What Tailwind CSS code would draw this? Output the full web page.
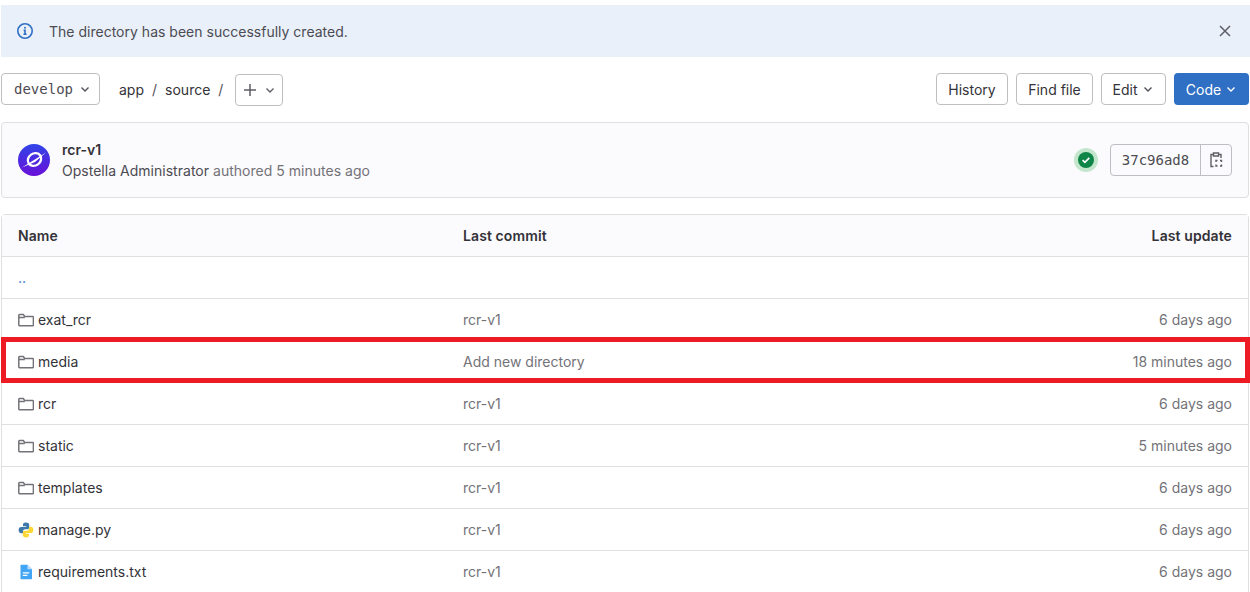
<!DOCTYPE html>
<html>
<head>
<meta charset="utf-8">
<script src="https://cdn.jsdelivr.net/npm/@tailwindcss/browser@4"></script>
</head>
<body class="bg-white overflow-hidden font-['Inter',sans-serif] text-[14px] text-[#303030]">
<div class="relative h-[592px] w-[1250px] overflow-hidden pl-px pt-[5px]">

  <!-- Alert -->
  <div class="flex h-[52px] items-center bg-[#e9f0fa] pl-4 pr-[17px] text-[#4c4b52]">
    <svg class="h-4 w-4 text-[#2f6fc4]" viewBox="0 0 16 16" fill="none" stroke="currentColor" stroke-width="1.6"><circle cx="8" cy="8" r="7.2"/><path d="M6.6 7.4H8v3.8M6.400 11.300h3.200" /><circle cx="8" cy="4.800" r="1" fill="currentColor" stroke="none"/></svg>
    <span class="ml-4 tracking-[0.01px]">The directory has been successfully created.</span>
    <svg class="ml-auto h-4 w-4 text-[#5e5e66]" viewBox="0 0 16 16" fill="none" stroke="currentColor" stroke-width="1.5"><path d="M3 3l10 10M13 3L3 13"/></svg>
  </div>

  <!-- Toolbar -->
  <div class="mt-4 flex h-[33px] items-start pr-px">
    <button class="flex h-[32px] w-[99px] items-center justify-between rounded border border-[#bfbfc3] pl-3 pr-2 font-['DejaVu_Sans_Mono',monospace] text-[14px] text-[#4c4b52]">
      develop
      <svg class="h-3 w-3 text-[#535158]" viewBox="0 0 12 12" fill="none" stroke="currentColor" stroke-width="1.4"><path d="M2.500 4.500L6 8l3.500-3.500"/></svg>
    </button>
    <div class="ml-[19px] flex h-[32px] items-center text-[#333238]">
      <span>app</span><span class="mx-[8px] text-[#535158]">/</span><span>source</span><span class="mx-[8px] text-[#535158]">/</span>
    </div>
    <button class="ml-[4px] mt-px flex h-[32px] w-[48px] items-center justify-center gap-[7px] rounded border border-[#bfbfc3] text-[#5e5e66]">
      <svg class="h-[14px] w-[14px]" viewBox="0 0 14 14" fill="none" stroke="currentColor" stroke-width="1.5"><path d="M7 1v12M1 7h12"/></svg>
      <svg class="h-3 w-3" viewBox="0 0 12 12" fill="none" stroke="currentColor" stroke-width="1.4"><path d="M2.500 4.500L6 8l3.500-3.500"/></svg>
    </button>
    <div class="ml-auto flex gap-2">
      <button class="h-[32px] w-[72px] rounded border border-[#bfbfc3] text-[#333238]">History</button>
      <button class="h-[32px] w-[77px] rounded border border-[#bfbfc3] text-[#333238]">Find file</button>
      <button class="flex h-[32px] w-[65px] items-center justify-center gap-[5px] rounded border border-[#bfbfc3] text-[#333238]">Edit
        <svg class="h-3 w-3 text-[#535158]" viewBox="0 0 12 12" fill="none" stroke="currentColor" stroke-width="1.4"><path d="M2.500 4.500L6 8l3.500-3.500"/></svg>
      </button>
      <button class="flex h-[32px] w-[75px] items-center justify-center gap-[4px] rounded bg-[#2f6fc4] text-white">Code
        <svg class="h-3 w-3" viewBox="0 0 12 12" fill="none" stroke="currentColor" stroke-width="1.4"><path d="M2.500 4.500L6 8l3.500-3.500"/></svg>
      </button>
    </div>
  </div>

  <!-- Last commit -->
  <div class="mt-[16px] flex h-[76px] w-[1248px] items-center rounded border border-[#dfdfe2] bg-[#fbfafd] pl-4 pr-4">
    <svg class="h-8 w-8" viewBox="0 0 32 32">
      <defs><linearGradient id="av" x1="0" y1="0" x2="0" y2="1"><stop offset="0" stop-color="#2f45e8"/><stop offset="1" stop-color="#6a10d8"/></linearGradient></defs>
      <circle cx="16" cy="16" r="16" fill="url(#av)"/>
      <ellipse cx="16.500" cy="15.500" rx="7" ry="6" transform="rotate(-35 16.500 15.500)" fill="none" stroke="#fff" stroke-width="2.300"/>
      <path d="M4 23.500L28 8.500l-11 9.500z" fill="#fff"/>
    </svg>
    <div class="ml-3 leading-[20px]">
      <div class="font-semibold text-[#333238]">rcr-v1</div>
      <div class="mt-px tracking-[0.02px] text-[#737278]"><span class="text-[#4c4b52]">Opstella Administrator</span> authored 5 minutes ago</div>
    </div>
    <div class="ml-auto mr-px flex h-6 w-6 items-center justify-center rounded-full bg-[#c3e6cd]">
      <svg class="h-4 w-4" viewBox="0 0 16 16"><circle cx="8" cy="8" r="8" fill="#108548"/><path d="M4.600 8.200l2.300 2.200 4.400-4.600" fill="none" stroke="#fff" stroke-width="1.700"/></svg>
    </div>
    <div class="ml-[11px] flex h-[32px] rounded border border-[#bfbfc3]">
      <div class="flex w-[90px] items-center justify-center border-r border-[#bfbfc3] font-['DejaVu_Sans_Mono',monospace] text-[14px] text-[#4c4b52]">37c96ad8</div>
      <div class="flex w-[30px] items-center justify-center text-[#5e5e66]">
        <svg class="h-4 w-4" viewBox="0 0 16 16" fill="none" stroke="currentColor" stroke-width="1.400"><path d="M5 2.500H3v12h2.500M11 2.500h2v3.500M5.500 1h5v3h-5z"/><path d="M8 10V8.500h1.500M12 8.500h1.500V10M13.500 12.500V14H12M9.500 14H8v-1.500"/></svg>
      </div>
    </div>
  </div>

  <!-- File table -->
  <div class="mt-[16px] w-[1248px] rounded-t border border-[#dfdfe2]">
    <div class="grid h-[42px] grid-cols-[445px_1fr_auto] items-center border-b border-[#dfdfe2] bg-[#fbfafd] px-4 font-semibold tracking-[0.1px] text-[#333238]">
      <div>Name</div><div>Last commit</div><div>Last update</div>
    </div>
    <div class="flex h-[42px] items-center border-b border-[#dfdfe2] px-4 text-[#1f75cb]">..</div>

    <div class="grid h-[42px] grid-cols-[445px_1fr_auto] items-center border-b border-[#dfdfe2] px-4 text-[#737278]">
      <div class="flex items-center gap-1 text-[#333238]">
        <svg class="h-4 w-4 text-[#737278]" viewBox="0 0 16 16" fill="none" stroke="currentColor" stroke-width="1.500"><path d="M.8 13V3.200c0-.4.3-.7.7-.7h3.800l1.400 2h8c.4 0 .7.3.7.7V13c0 .4-.3.7-.7.700H1.500C1.100 13.700.8 13.400.8 13zM.8 5.500h6"/></svg>
        exat_rcr</div>
      <div>rcr-v1</div><div>6 days ago</div>
    </div>
    <div class="grid h-[42px] grid-cols-[445px_1fr_auto] items-center border-b border-[#dfdfe2] px-4 text-[#737278]">
      <div class="flex items-center gap-1 text-[#333238]">
        <svg class="h-4 w-4 text-[#737278]" viewBox="0 0 16 16" fill="none" stroke="currentColor" stroke-width="1.500"><path d="M.8 13V3.200c0-.4.3-.7.7-.7h3.800l1.400 2h8c.4 0 .7.3.7.7V13c0 .4-.3.7-.7.700H1.500C1.100 13.700.8 13.400.8 13zM.8 5.500h6"/></svg>
        media</div>
      <div>Add new directory</div><div>18 minutes ago</div>
    </div>
    <div class="grid h-[42px] grid-cols-[445px_1fr_auto] items-center border-b border-[#dfdfe2] px-4 text-[#737278]">
      <div class="flex items-center gap-1 text-[#333238]">
        <svg class="h-4 w-4 text-[#737278]" viewBox="0 0 16 16" fill="none" stroke="currentColor" stroke-width="1.500"><path d="M.8 13V3.200c0-.4.3-.7.7-.7h3.800l1.400 2h8c.4 0 .7.3.7.7V13c0 .4-.3.7-.7.700H1.500C1.100 13.700.8 13.400.8 13zM.8 5.500h6"/></svg>
        rcr</div>
      <div>rcr-v1</div><div>6 days ago</div>
    </div>
    <div class="grid h-[42px] grid-cols-[445px_1fr_auto] items-center border-b border-[#dfdfe2] px-4 text-[#737278]">
      <div class="flex items-center gap-1 text-[#333238]">
        <svg class="h-4 w-4 text-[#737278]" viewBox="0 0 16 16" fill="none" stroke="currentColor" stroke-width="1.500"><path d="M.8 13V3.200c0-.4.3-.7.7-.7h3.800l1.400 2h8c.4 0 .7.3.7.7V13c0 .4-.3.7-.7.700H1.500C1.100 13.700.8 13.400.8 13zM.8 5.500h6"/></svg>
        static</div>
      <div>rcr-v1</div><div>5 minutes ago</div>
    </div>
    <div class="grid h-[42px] grid-cols-[445px_1fr_auto] items-center border-b border-[#dfdfe2] px-4 text-[#737278]">
      <div class="flex items-center gap-1 text-[#333238]">
        <svg class="h-4 w-4 text-[#737278]" viewBox="0 0 16 16" fill="none" stroke="currentColor" stroke-width="1.500"><path d="M.8 13V3.200c0-.4.3-.7.7-.7h3.800l1.400 2h8c.4 0 .7.3.7.7V13c0 .4-.3.7-.7.700H1.500C1.100 13.700.8 13.400.8 13zM.8 5.500h6"/></svg>
        templates</div>
      <div>rcr-v1</div><div>6 days ago</div>
    </div>
    <div class="grid h-[42px] grid-cols-[445px_1fr_auto] items-center border-b border-[#dfdfe2] px-4 text-[#737278]">
      <div class="flex items-center gap-1 text-[#333238]">
        <svg class="h-4 w-4" viewBox="0 0 16 16"><path d="M7.900.5C5.400.5 5 1.600 5 2.700v1.600h3.200v.6H3.100C1.700 4.900.6 6 .6 8s1.100 3.200 2.500 3.200H5V9.400C5 8 6 7.200 7 7.200h2.500c1 0 1.700-.8 1.700-1.700V2.700C11.200 1.400 9.900.5 7.900.5z" fill="#3c78a9"/><path d="M8.100 15.500c2.500 0 2.900-1.100 2.900-2.200v-1.600H7.800v-.6h5.100c1.400 0 2.500-1.100 2.500-3.100s-1.100-3.200-2.500-3.200H11v1.800C11 8 10 8.800 9 8.800H6.500c-1 0-1.700.8-1.700 1.700v2.800c0 1.300 1.300 2.200 3.300 2.200z" fill="#fdd835"/></svg>
        manage.py</div>
      <div>rcr-v1</div><div>6 days ago</div>
    </div>
    <div class="grid h-[42px] grid-cols-[445px_1fr_auto] items-center border-b border-[#dfdfe2] px-4 text-[#737278]">
      <div class="flex items-center gap-1 text-[#333238]">
        <svg class="h-4 w-4" viewBox="0 0 16 16"><path d="M3.500.8h6l4.500 4.500v8.900c0 .6-.4 1-1 1H3.500c-.6 0-1-.4-1-1V1.800c0-.6.4-1 1-1z" fill="#42a5f5"/><path d="M9.500.8v4.500h4.500z" fill="#bbdefb"/><path d="M4.800 8.800h6.400M4.800 11.300h4.600" stroke="#fff" stroke-width="1.200"/></svg>
        requirements.txt</div>
      <div>rcr-v1</div><div>6 days ago</div>
    </div>
  </div>

  <!-- Red annotation drawn over the media row -->
  <div class="absolute left-px top-[337px] h-[46px] w-[1249px] border-[5px] border-[#ed1c24]"></div>
</div>
</body>
</html>
